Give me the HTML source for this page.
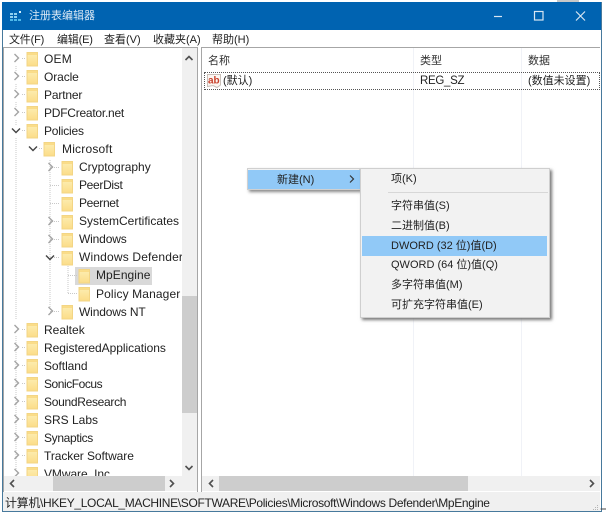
<!DOCTYPE html>
<html><head><meta charset="utf-8">
<style>
html,body{margin:0;padding:0;width:606px;height:515px;overflow:hidden;background:#fff}
body{position:relative;font-family:"Liberation Sans","Noto Sans CJK SC",sans-serif;font-size:12px;color:#222;filter:blur(.3px)}
.a{position:absolute}
.t{position:absolute;white-space:nowrap;line-height:18px;height:18px}
.tr{font-size:12px}
.m{position:absolute;white-space:nowrap;line-height:18px;top:31px;font-size:11px}
.c{position:absolute;white-space:nowrap;line-height:20px;font-size:11px;left:391px}
</style></head><body>
<!-- window frame -->
<div class="a" style="left:2px;top:2px;width:598px;height:509px;border:1px solid #47799c;border-top:0;background:#fff"></div>
<div class="a" style="left:557px;top:0;width:22px;height:2px;background:#c8c8c8"></div>
<!-- title bar -->
<div class="a" style="left:2px;top:2px;width:599px;height:28px;background:#0063b1"></div>
<svg class="a" style="left:10px;top:10px" width="13" height="13"><g fill="#8fd0f0"><rect x="0" y="3" width="3" height="2"/><rect x="4" y="3" width="3" height="2"/><rect x="0" y="6" width="3" height="2"/><rect x="4" y="6" width="3" height="2"/><rect x="0" y="9" width="3" height="2" fill="#4fb8e8"/><rect x="4" y="9" width="3" height="2" fill="#4fb8e8"/><rect x="8" y="9" width="3" height="2" fill="#4fb8e8"/><rect x="9" y="1" width="2" height="2" fill="#d5eefa"/></g></svg>
<div class="t" style="left:29px;top:7px;font-size:11px;color:#dbe9f5">注册表编辑器</div>
<svg class="a" style="left:490px;top:8px" width="100" height="16"><g stroke="#d8e6f2" stroke-width="1.2" fill="none"><path d="M4 8.500H12"/><rect x="44.500" y="3.500" width="8.500" height="8.500"/><path d="M86 3.500L95 12.500M95 3.500L86 12.500"/></g></svg>
<!-- menu -->
<div class="m" style="left:9px;letter-spacing:-.2px">文件(F)</div>
<div class="m" style="left:57px;letter-spacing:-.2px">编辑(E)</div>
<div class="m" style="left:104px">查看(V)</div>
<div class="m" style="left:153px">收藏夹(A)</div>
<div class="m" style="left:212px">帮助(H)</div>
<!-- panes -->
<div class="a" style="left:3px;top:47px;width:193px;height:444px;border:1px solid #a6a6a6;background:#fff"></div>
<div class="a" style="left:201px;top:47px;width:398px;height:444px;border:1px solid #a6a6a6;border-right:0;background:#fff"></div>
<!-- tree -->
<div class="a" style="left:4px;top:48px;width:178px;height:428px;overflow:hidden">
<div class="a" style="left:71px;top:219px;width:77px;height:18px;background:#d9d9d9"></div>
<svg class="a" style="left:-4px;top:-48px" width="190" height="480">
<defs>
<linearGradient id="g" x1="0" y1="0" x2="0" y2="1"><stop offset="0" stop-color="#fdeeb4"/><stop offset="1" stop-color="#fbdc88"/></linearGradient>
<symbol id="f" width="13" height="16" overflow="visible"><path d="M1 1.500H11.500V15H1Z" fill="url(#g)" stroke="#f3d584" stroke-width="1"/><path d="M1.500 3H11" stroke="#f7cd63" stroke-width="1"/></symbol>
<symbol id="r" width="8" height="10" overflow="visible"><path d="M1.500 1L5.500 5L1.500 9" fill="none" stroke="#a3a3a3" stroke-width="1.400"/></symbol>
<symbol id="d" width="10" height="8" overflow="visible"><path d="M1 1.500L5 5.500L9 1.500" fill="none" stroke="#444" stroke-width="1.400"/></symbol>
</defs>
<g stroke="#c8c8c8" stroke-width="1" stroke-dasharray="1 1" fill="none">
<path d="M16 66V72M16 84V90M16 102V108M16 120V126M16 138V320M16 336V470"/>
<path d="M22 58.500H26M22 76.500H26M22 94.500H26M22 112.500H26M22 130.500H26M22 329.500H26M22 347.500H26M22 365.500H26M22 383.500H26M22 401.500H26M22 419.500H26M22 437.500H26M22 455.500H26"/>
<path d="M39 148.500H43"/>
<path d="M50 160V310M50 167.500H60M50 185.500H60M50 203.500H60M50 221.500H60M50 239.500H60M50 257.500H60M50 311.500H60"/>
<path d="M68 264V294M68 275.500H78M68 293.500H78"/>
</g>
<g>
<use href="#r" x="13" y="53"/><use href="#r" x="13" y="71"/><use href="#r" x="13" y="89"/><use href="#r" x="13" y="107"/>
<use href="#d" x="11" y="127"/>
<use href="#d" x="28" y="145"/>
<use href="#r" x="47" y="162"/><use href="#r" x="47" y="216"/><use href="#r" x="47" y="234"/>
<use href="#d" x="45" y="254"/>
<use href="#r" x="47" y="306"/>
<use href="#r" x="13" y="324"/><use href="#r" x="13" y="342"/><use href="#r" x="13" y="360"/><use href="#r" x="13" y="378"/><use href="#r" x="13" y="396"/><use href="#r" x="13" y="414"/><use href="#r" x="13" y="432"/><use href="#r" x="13" y="450"/><use href="#r" x="13" y="468"/>
<use href="#f" x="26" y="51"/><use href="#f" x="26" y="69"/><use href="#f" x="26" y="87"/><use href="#f" x="26" y="105"/><use href="#f" x="26" y="123"/>
<use href="#f" x="43" y="141"/>
<use href="#f" x="61" y="160"/><use href="#f" x="61" y="178"/><use href="#f" x="61" y="196"/><use href="#f" x="61" y="214"/><use href="#f" x="61" y="232"/><use href="#f" x="61" y="250"/>
<use href="#f" x="78" y="268"/><use href="#f" x="78" y="286"/>
<use href="#f" x="61" y="304"/>
<use href="#f" x="26" y="322"/><use href="#f" x="26" y="340"/><use href="#f" x="26" y="358"/><use href="#f" x="26" y="376"/><use href="#f" x="26" y="394"/><use href="#f" x="26" y="412"/><use href="#f" x="26" y="430"/><use href="#f" x="26" y="448"/><use href="#f" x="26" y="466"/>
</g>
</svg>
<div class="t tr" style="left:40px;top:2px;letter-spacing:.2px">OEM</div>
<div class="t tr" style="left:40px;top:20px;letter-spacing:-.1px">Oracle</div>
<div class="t tr" style="left:40px;top:38px;letter-spacing:-.16px">Partner</div>
<div class="t tr" style="left:40px;top:56px;letter-spacing:-.24px">PDFCreator.net</div>
<div class="t tr" style="left:40px;top:74px;letter-spacing:-.2px">Policies</div>
<div class="t tr" style="left:58px;top:92px;letter-spacing:.2px">Microsoft</div>
<div class="t tr" style="left:75px;top:110px;letter-spacing:-.03px">Cryptography</div>
<div class="t tr" style="left:75px;top:128px;letter-spacing:-.32px">PeerDist</div>
<div class="t tr" style="left:75px;top:146px;letter-spacing:-.35px">Peernet</div>
<div class="t tr" style="left:75px;top:164px;letter-spacing:0">SystemCertificates</div>
<div class="t tr" style="left:75px;top:182px;letter-spacing:-.16px">Windows</div>
<div class="t tr" style="left:75px;top:200px;letter-spacing:.17px">Windows Defender</div>
<div class="t tr" style="left:92px;top:218px;letter-spacing:.05px">MpEngine</div>
<div class="t tr" style="left:92px;top:237px;letter-spacing:.12px">Policy Manager</div>
<div class="t tr" style="left:75px;top:255px;letter-spacing:-.15px">Windows NT</div>
<div class="t tr" style="left:40px;top:273px;letter-spacing:0">Realtek</div>
<div class="t tr" style="left:40px;top:291px;letter-spacing:-.04px">RegisteredApplications</div>
<div class="t tr" style="left:40px;top:309px;letter-spacing:-.07px">Softland</div>
<div class="t tr" style="left:40px;top:327px;letter-spacing:-.45px">SonicFocus</div>
<div class="t tr" style="left:40px;top:345px;letter-spacing:-.3px">SoundResearch</div>
<div class="t tr" style="left:40px;top:363px;letter-spacing:0">SRS Labs</div>
<div class="t tr" style="left:40px;top:381px;letter-spacing:-.34px">Synaptics</div>
<div class="t tr" style="left:40px;top:399px;letter-spacing:-.07px">Tracker Software</div>
<div class="t tr" style="left:40px;top:417px;letter-spacing:-.07px">VMware, Inc.</div>
</div>
<!-- left v scrollbar -->
<div class="a" style="left:182px;top:48px;width:15px;height:428px;background:#f0f0f0"></div>
<div class="a" style="left:182px;top:296px;width:15px;height:117px;background:#cdcdcd"></div>
<!-- h scrollbars -->
<div class="a" style="left:4px;top:476px;width:193px;height:15px;background:#f0f0f0"></div>
<div class="a" style="left:53px;top:476px;width:112px;height:15px;background:#cdcdcd"></div>
<div class="a" style="left:202px;top:476px;width:398px;height:15px;background:#f0f0f0"></div>
<div class="a" style="left:219px;top:476px;width:249px;height:15px;background:#cdcdcd"></div>
<svg class="a" style="left:0;top:0;pointer-events:none" width="606" height="515"><g fill="none" stroke="#505050" stroke-width="1.600">
<path d="M185.500 60L189 56.500L192.500 60"/><path d="M185.500 466L189 469.500L192.500 466"/>
<path d="M14 480L10.500 483.500L14 487"/><path d="M170 480L173.500 483.500L170 487"/>
<path d="M213 480L209.500 483.500L213 487"/><path d="M590 480L593.500 483.500L590 487"/>
</g></svg>
<!-- list -->
<div class="t" style="left:208px;top:52px;font-size:11px;color:#333">名称</div>
<div class="t" style="left:420px;top:52px;font-size:11px;color:#333">类型</div>
<div class="t" style="left:528px;top:52px;font-size:11px;color:#333">数据</div>
<div class="a" style="left:413px;top:48px;width:1px;height:428px;background:#f0f2f7"></div>
<div class="a" style="left:521px;top:48px;width:1px;height:428px;background:#f0f2f7"></div>
<div class="a" style="left:204px;top:72px;width:394px;height:16px;border:1px dotted #555"></div>
<svg class="a" style="left:206px;top:73px" width="16" height="16"><path d="M1.500 1.500H14.500V12L11 14.500L7 12.500L1.500 13.500Z" fill="#fbf6f2" stroke="#c9bfb8"/><text x="2" y="10.500" font-family="Liberation Sans,sans-serif" font-size="10" font-weight="bold" fill="#c8402a">ab</text></svg>
<div class="t" style="left:223px;top:72px;font-size:11px">(默认)</div>
<div class="t" style="left:420px;top:72px;font-size:11.500px;letter-spacing:-.3px">REG_SZ</div>
<div class="t" style="left:528px;top:72px;font-size:11px">(数值未设置)</div>
<!-- status -->
<div class="a" style="left:3px;top:492px;width:597px;height:19px;background:#f0f0f0"></div>
<div class="t" style="left:5px;top:494px;font-size:12px;letter-spacing:-.33px">计算机\HKEY_LOCAL_MACHINE\SOFTWARE\Policies\Microsoft\Windows Defender\MpEngine</div>
<svg class="a" style="left:590px;top:503px" width="16" height="12"><g fill="#b5b5b5"><rect x="7" y="2" width="1" height="1"/><rect x="5" y="4" width="1" height="1"/><rect x="7" y="4" width="1" height="1"/><rect x="3" y="6" width="1" height="1"/><rect x="5" y="6" width="1" height="1"/><rect x="7" y="6" width="1" height="1"/></g><path d="M10.500 6H16" stroke="#444" stroke-width="1"/></svg>
<!-- context menus -->
<div class="a" style="left:247px;top:168px;width:113px;height:22px;background:#f2f2f2;border:1px solid #d0d0d0;box-sizing:border-box;box-shadow:2px 2px 3px #888"></div>
<div class="a" style="left:248px;top:170px;width:112px;height:19px;background:#91c9f7"></div>
<div class="t" style="left:277px;top:171px;font-size:11px">新建(N)</div>
<svg class="a" style="left:348px;top:174px" width="8" height="10"><path d="M2 1.500L5.500 5L2 8.500" fill="none" stroke="#333" stroke-width="1.200"/></svg>
<div class="a" style="left:360px;top:168px;width:190px;height:150px;background:#f2f2f2;border:1px solid #cfcfcf;box-sizing:border-box;box-shadow:2px 2px 3px #777"></div>
<div class="a" style="left:388px;top:192px;width:160px;height:1px;background:#d7d7d7"></div>
<div class="a" style="left:362px;top:236px;width:185px;height:20px;background:#91c9f7"></div>
<div class="c" style="top:169px">项(K)</div>
<div class="c" style="top:196px">字符串值(S)</div>
<div class="c" style="top:216px">二进制值(B)</div>
<div class="c" style="top:236px">DWORD (32 位)值(D)</div>
<div class="c" style="top:255px">QWORD (64 位)值(Q)</div>
<div class="c" style="top:275px">多字符串值(M)</div>
<div class="c" style="top:295px">可扩充字符串值(E)</div>
</body></html>
